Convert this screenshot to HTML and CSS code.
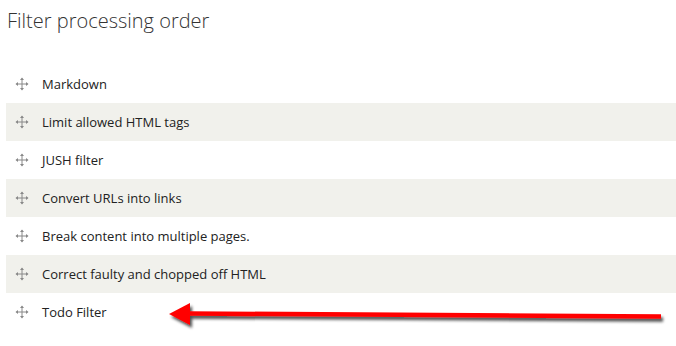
FILE: index.html
```html
<!DOCTYPE html>
<html>
<head>
<meta charset="utf-8">
<link rel="stylesheet" href="styles.css">
</head>
<body>
<h3 class="title">Filter processing order</h3>
<div class="list">
  <div class="row"><span class="handle"><svg width="14" height="14" viewBox="0 0 14 14"><path d="M7 1.5V12.5M1.5 7H12.5" stroke="#888" stroke-width="1"/><path d="M7 0.5L9 3H5ZM7 13.5L9 11H5ZM0.5 7L3 5V9ZM13.5 7L11 5V9Z" fill="#888"/></svg></span>Markdown</div>
  <div class="row"><span class="handle"><svg width="14" height="14" viewBox="0 0 14 14"><path d="M7 1.5V12.5M1.5 7H12.5" stroke="#888" stroke-width="1"/><path d="M7 0.5L9 3H5ZM7 13.5L9 11H5ZM0.5 7L3 5V9ZM13.5 7L11 5V9Z" fill="#888"/></svg></span>Limit allowed HTML tags</div>
  <div class="row"><span class="handle"><svg width="14" height="14" viewBox="0 0 14 14"><path d="M7 1.5V12.5M1.5 7H12.5" stroke="#888" stroke-width="1"/><path d="M7 0.5L9 3H5ZM7 13.5L9 11H5ZM0.5 7L3 5V9ZM13.5 7L11 5V9Z" fill="#888"/></svg></span>JUSH filter</div>
  <div class="row"><span class="handle"><svg width="14" height="14" viewBox="0 0 14 14"><path d="M7 1.5V12.5M1.5 7H12.5" stroke="#888" stroke-width="1"/><path d="M7 0.5L9 3H5ZM7 13.5L9 11H5ZM0.5 7L3 5V9ZM13.5 7L11 5V9Z" fill="#888"/></svg></span>Convert URLs into links</div>
  <div class="row"><span class="handle"><svg width="14" height="14" viewBox="0 0 14 14"><path d="M7 1.5V12.5M1.5 7H12.5" stroke="#888" stroke-width="1"/><path d="M7 0.5L9 3H5ZM7 13.5L9 11H5ZM0.5 7L3 5V9ZM13.5 7L11 5V9Z" fill="#888"/></svg></span>Break content into multiple pages.</div>
  <div class="row"><span class="handle"><svg width="14" height="14" viewBox="0 0 14 14"><path d="M7 1.5V12.5M1.5 7H12.5" stroke="#888" stroke-width="1"/><path d="M7 0.5L9 3H5ZM7 13.5L9 11H5ZM0.5 7L3 5V9ZM13.5 7L11 5V9Z" fill="#888"/></svg></span>Correct faulty and chopped off HTML</div>
  <div class="row"><span class="handle"><svg width="14" height="14" viewBox="0 0 14 14"><path d="M7 1.5V12.5M1.5 7H12.5" stroke="#888" stroke-width="1"/><path d="M7 0.5L9 3H5ZM7 13.5L9 11H5ZM0.5 7L3 5V9ZM13.5 7L11 5V9Z" fill="#888"/></svg></span>Todo Filter</div>
</div>
<svg class="arrow" width="676" height="346" viewBox="0 0 676 346">
  <defs>
    <filter id="sh" x="-10%" y="-100%" width="120%" height="300%">
      <feGaussianBlur in="SourceAlpha" stdDeviation="1.5"/>
      <feOffset dx="2" dy="3" result="b"/>
      <feComponentTransfer><feFuncA type="linear" slope="0.7"/></feComponentTransfer>
      <feMerge><feMergeNode/><feMergeNode in="SourceGraphic"/></feMerge>
    </filter>
  </defs>
  <g filter="url(#sh)">
    <path d="M188 313.5L661 316.5" stroke="#ff0000" stroke-width="4.5"/>
    <path d="M169 314L190 303L190 325Z" fill="#ff0000"/>
  </g>
</svg>
</body>
</html>
```
FILE: styles.css
```css
body {
  margin: 0;
  font-family: "Open Sans", "Liberation Sans", sans-serif;
  background: #fff;
  position: relative;
  width: 676px;
  height: 346px;
  overflow: hidden;
}
.title {
  margin: 0;
  padding: 6px 0 0 7px;
  height: 65px;
  box-sizing: border-box;
  font-size: 20px;
  font-weight: 300;
  color: #333;
  line-height: 30px;
}
.list {
  margin-left: 6px;
}
.row {
  height: 38px;
  display: flex;
  align-items: center;
  font-size: 13px;
  color: #222;
}
.row:nth-child(even) {
  background: #f1f1ec;
}
.handle {
  width: 36px;
  display: flex;
  padding-left: 9px;
  box-sizing: border-box;
}
.handle svg { display: block; }
.arrow {
  position: absolute;
  left: 0;
  top: 0;
  pointer-events: none;
}
```
